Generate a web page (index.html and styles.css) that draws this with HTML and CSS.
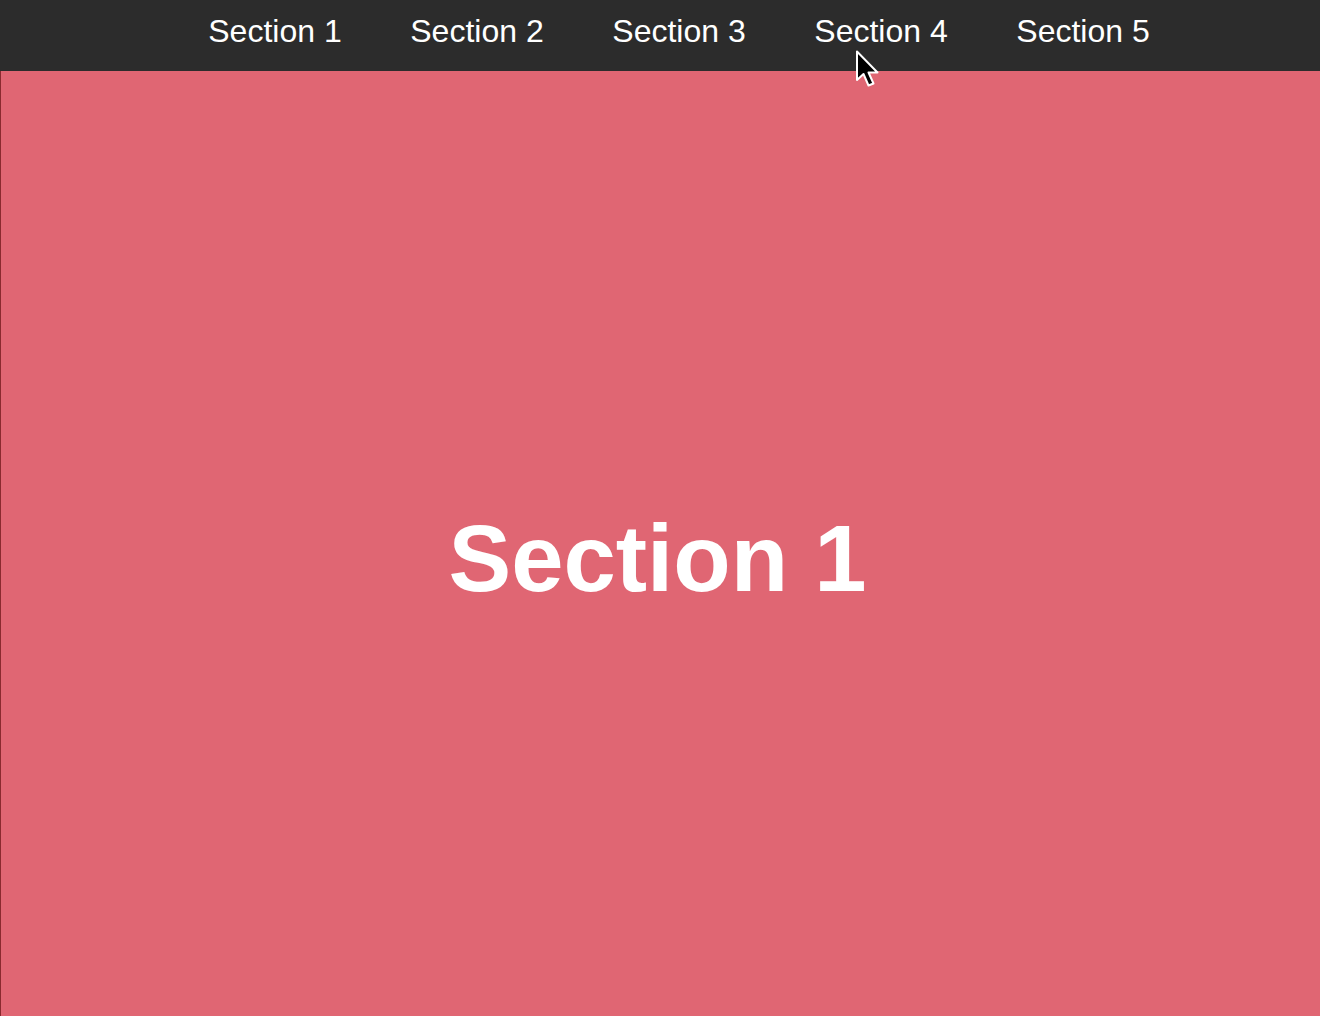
FILE: index.html
```html
<!DOCTYPE html>
<html lang="en">
<head>
<meta charset="utf-8">
<title>Sections</title>
<link rel="stylesheet" href="styles.css">
</head>
<body>
<nav class="nav">
  <ul class="nav-list">
    <li><a class="nav-link" href="#s1">Section 1</a></li>
    <li><a class="nav-link" href="#s2">Section 2</a></li>
    <li><a class="nav-link" href="#s3">Section 3</a></li>
    <li><a class="nav-link" href="#s4">Section 4</a></li>
    <li><a class="nav-link" href="#s5">Section 5</a></li>
  </ul>
</nav>
<main class="section" id="s1">
  <h1 class="section-title">Section 1</h1>
</main>
<svg class="cursor" width="26" height="40" viewBox="0 0 26 40" aria-hidden="true">
  <path d="M2 1.5 L2 30 L8.5 24 L13.5 35.5 L18.5 33.5 L13.5 22.5 L22.5 22.5 Z" fill="#000" stroke="#fff" stroke-width="2" stroke-linejoin="round"/>
</svg>
</body>
</html>
```
FILE: styles.css
```css
html, body {
  margin: 0;
  padding: 0;
  height: 100%;
  overflow: hidden;
}
body {
  font-family: "Liberation Sans", Arial, sans-serif;
  background: #e06673;
  display: flex;
  flex-direction: column;
}
.nav {
  background: #2c2c2c;
  height: 71px;
  flex: none;
}
.nav-list {
  list-style: none;
  margin: 0;
  padding: 13px 0 0 38px;
  display: flex;
  justify-content: center;
  gap: 68.6px;
}
.nav-link {
  color: #fff;
  text-decoration: none;
  font-size: 32px;
}
.section {
  flex: 1;
  background: #e06673;
  border-left: 1px solid #8a2a2f;
  display: flex;
  align-items: center;
  justify-content: center;
  padding-top: 30px;
  padding-right: 6px;
}
.section-title {
  margin: 0;
  color: #fff;
  font-size: 94px;
  font-weight: bold;
}
.cursor {
  position: absolute;
  left: 855px;
  top: 50px;
}
```
